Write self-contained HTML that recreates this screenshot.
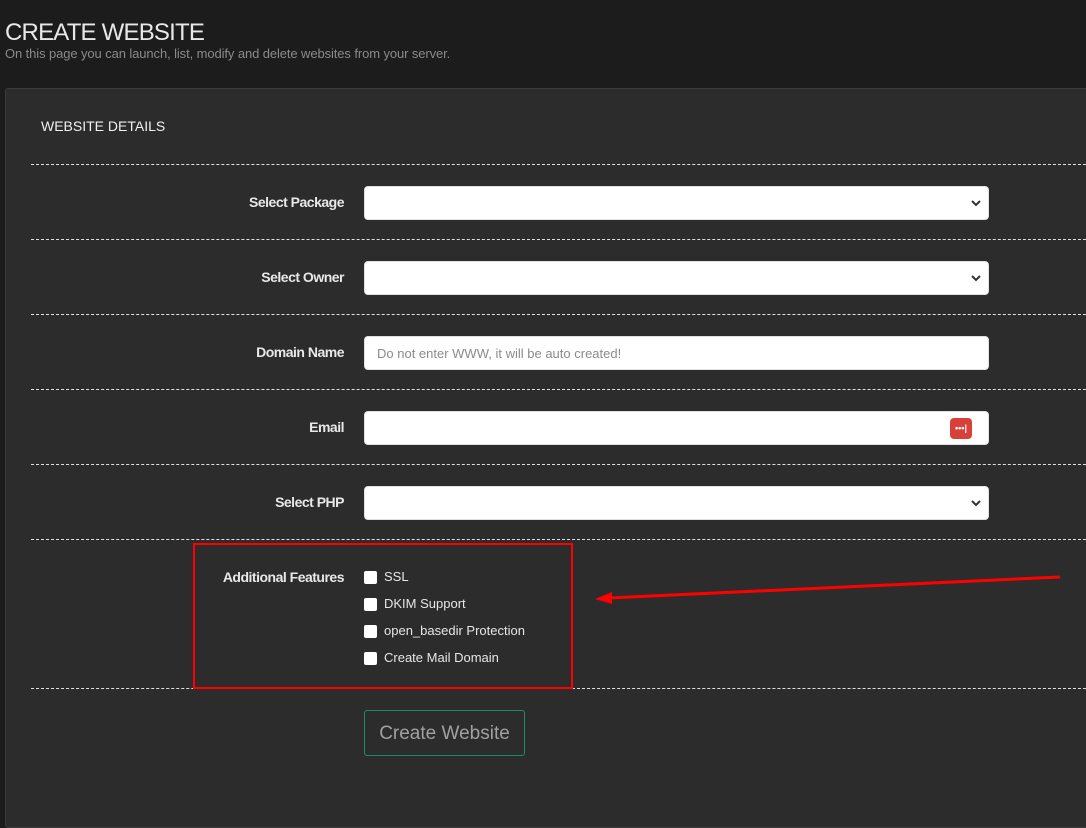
<!DOCTYPE html>
<html><head><style>
*{box-sizing:border-box;margin:0;padding:0}
body{width:1086px;height:809px;background:#1c1c1c;font-family:"Liberation Sans",sans-serif;position:relative;overflow:hidden}
.abs{position:absolute}
h1{position:absolute;left:5px;top:19px;font-size:24px;font-weight:normal;color:#e8e8e8;letter-spacing:-0.8px}
.sub{left:5px;top:46px;font-size:13px;color:#8a8a8a;letter-spacing:-0.1px}
.card{left:5px;top:88px;width:1090px;height:740px;background:#2c2c2c;border:1px solid #3a3a3a;border-radius:3px}
.hd{left:41px;top:118px;font-size:14px;color:#f0f0f0}
.dash{left:31px;width:1060px;border-top:1px dashed #e0e0e0;height:0}
.lbl{width:344px;left:0;text-align:right;font-size:14px;font-weight:bold;color:#e8e8e8;letter-spacing:-0.5px}
.inp{left:364px;width:625px;height:34px;background:#fff;border-radius:4px;border:1px solid #dfe3e8}
.chev{position:absolute;right:6px;top:10px}
.ph{position:absolute;left:12px;top:9px;font-size:13px;color:#8b8b8b}
.cb{left:364px;width:13px;height:13px;background:#fff;border-radius:2px}
.cbl{left:384px;font-size:13px;color:#e6e6e6}
</style></head><body>
<h1>CREATE WEBSITE</h1>
<div class="abs sub">On this page you can launch, list, modify and delete websites from your server.</div>
<div class="abs card"></div>
<div class="abs hd">WEBSITE DETAILS</div>
<div class="abs dash" style="top:164px"></div>
<div class="abs dash" style="top:239px"></div>
<div class="abs dash" style="top:314px"></div>
<div class="abs dash" style="top:389px"></div>
<div class="abs dash" style="top:464px"></div>
<div class="abs dash" style="top:539px"></div>
<div class="abs dash" style="top:688px"></div>

<div class="abs lbl" style="top:194px">Select Package</div>
<div class="abs inp" style="top:186px"><svg class="chev" width="12" height="12" viewBox="0 0 12 12"><path d="M2 4l4 4 4-4" stroke="#333" stroke-width="2" fill="none"/></svg></div>
<div class="abs lbl" style="top:269px">Select Owner</div>
<div class="abs inp" style="top:261px"><svg class="chev" width="12" height="12" viewBox="0 0 12 12"><path d="M2 4l4 4 4-4" stroke="#333" stroke-width="2" fill="none"/></svg></div>
<div class="abs lbl" style="top:344px">Domain Name</div>
<div class="abs inp" style="top:336px"><span class="ph">Do not enter WWW, it will be auto created!</span></div>
<div class="abs lbl" style="top:419px">Email</div>
<div class="abs inp" style="top:411px"><div style="position:absolute;left:585px;top:6px;width:22px;height:21px;background:#d9403a;border-radius:4px;color:#fff;font-size:9px;line-height:21px;text-align:center;font-weight:bold">•••|</div></div>
<div class="abs lbl" style="top:494px">Select PHP</div>
<div class="abs inp" style="top:486px"><svg class="chev" width="12" height="12" viewBox="0 0 12 12"><path d="M2 4l4 4 4-4" stroke="#333" stroke-width="2" fill="none"/></svg></div>

<div class="abs lbl" style="top:569px">Additional Features</div>
<div class="abs cb" style="top:571px"></div><div class="abs cbl" style="top:569px">SSL</div>
<div class="abs cb" style="top:598px"></div><div class="abs cbl" style="top:596px">DKIM Support</div>
<div class="abs cb" style="top:625px"></div><div class="abs cbl" style="top:623px">open_basedir Protection</div>
<div class="abs cb" style="top:652px"></div><div class="abs cbl" style="top:650px">Create Mail Domain</div>
<div class="abs" style="left:193px;top:543px;width:380px;height:146px;border:2px solid #f00"></div>
<svg class="abs" style="left:0;top:0" width="1086" height="809"><line x1="1060" y1="577" x2="608" y2="598" stroke="#f00" stroke-width="3"/><path d="M595 599L612 592L612 604Z" fill="#f00"/></svg>

<div class="abs" style="left:364px;top:710px;width:161px;height:46px;border:1px solid #1f8a6f;border-radius:3px;color:#a0a0a0;font-size:19px;line-height:46px;text-align:center">Create Website</div>
</body></html>
